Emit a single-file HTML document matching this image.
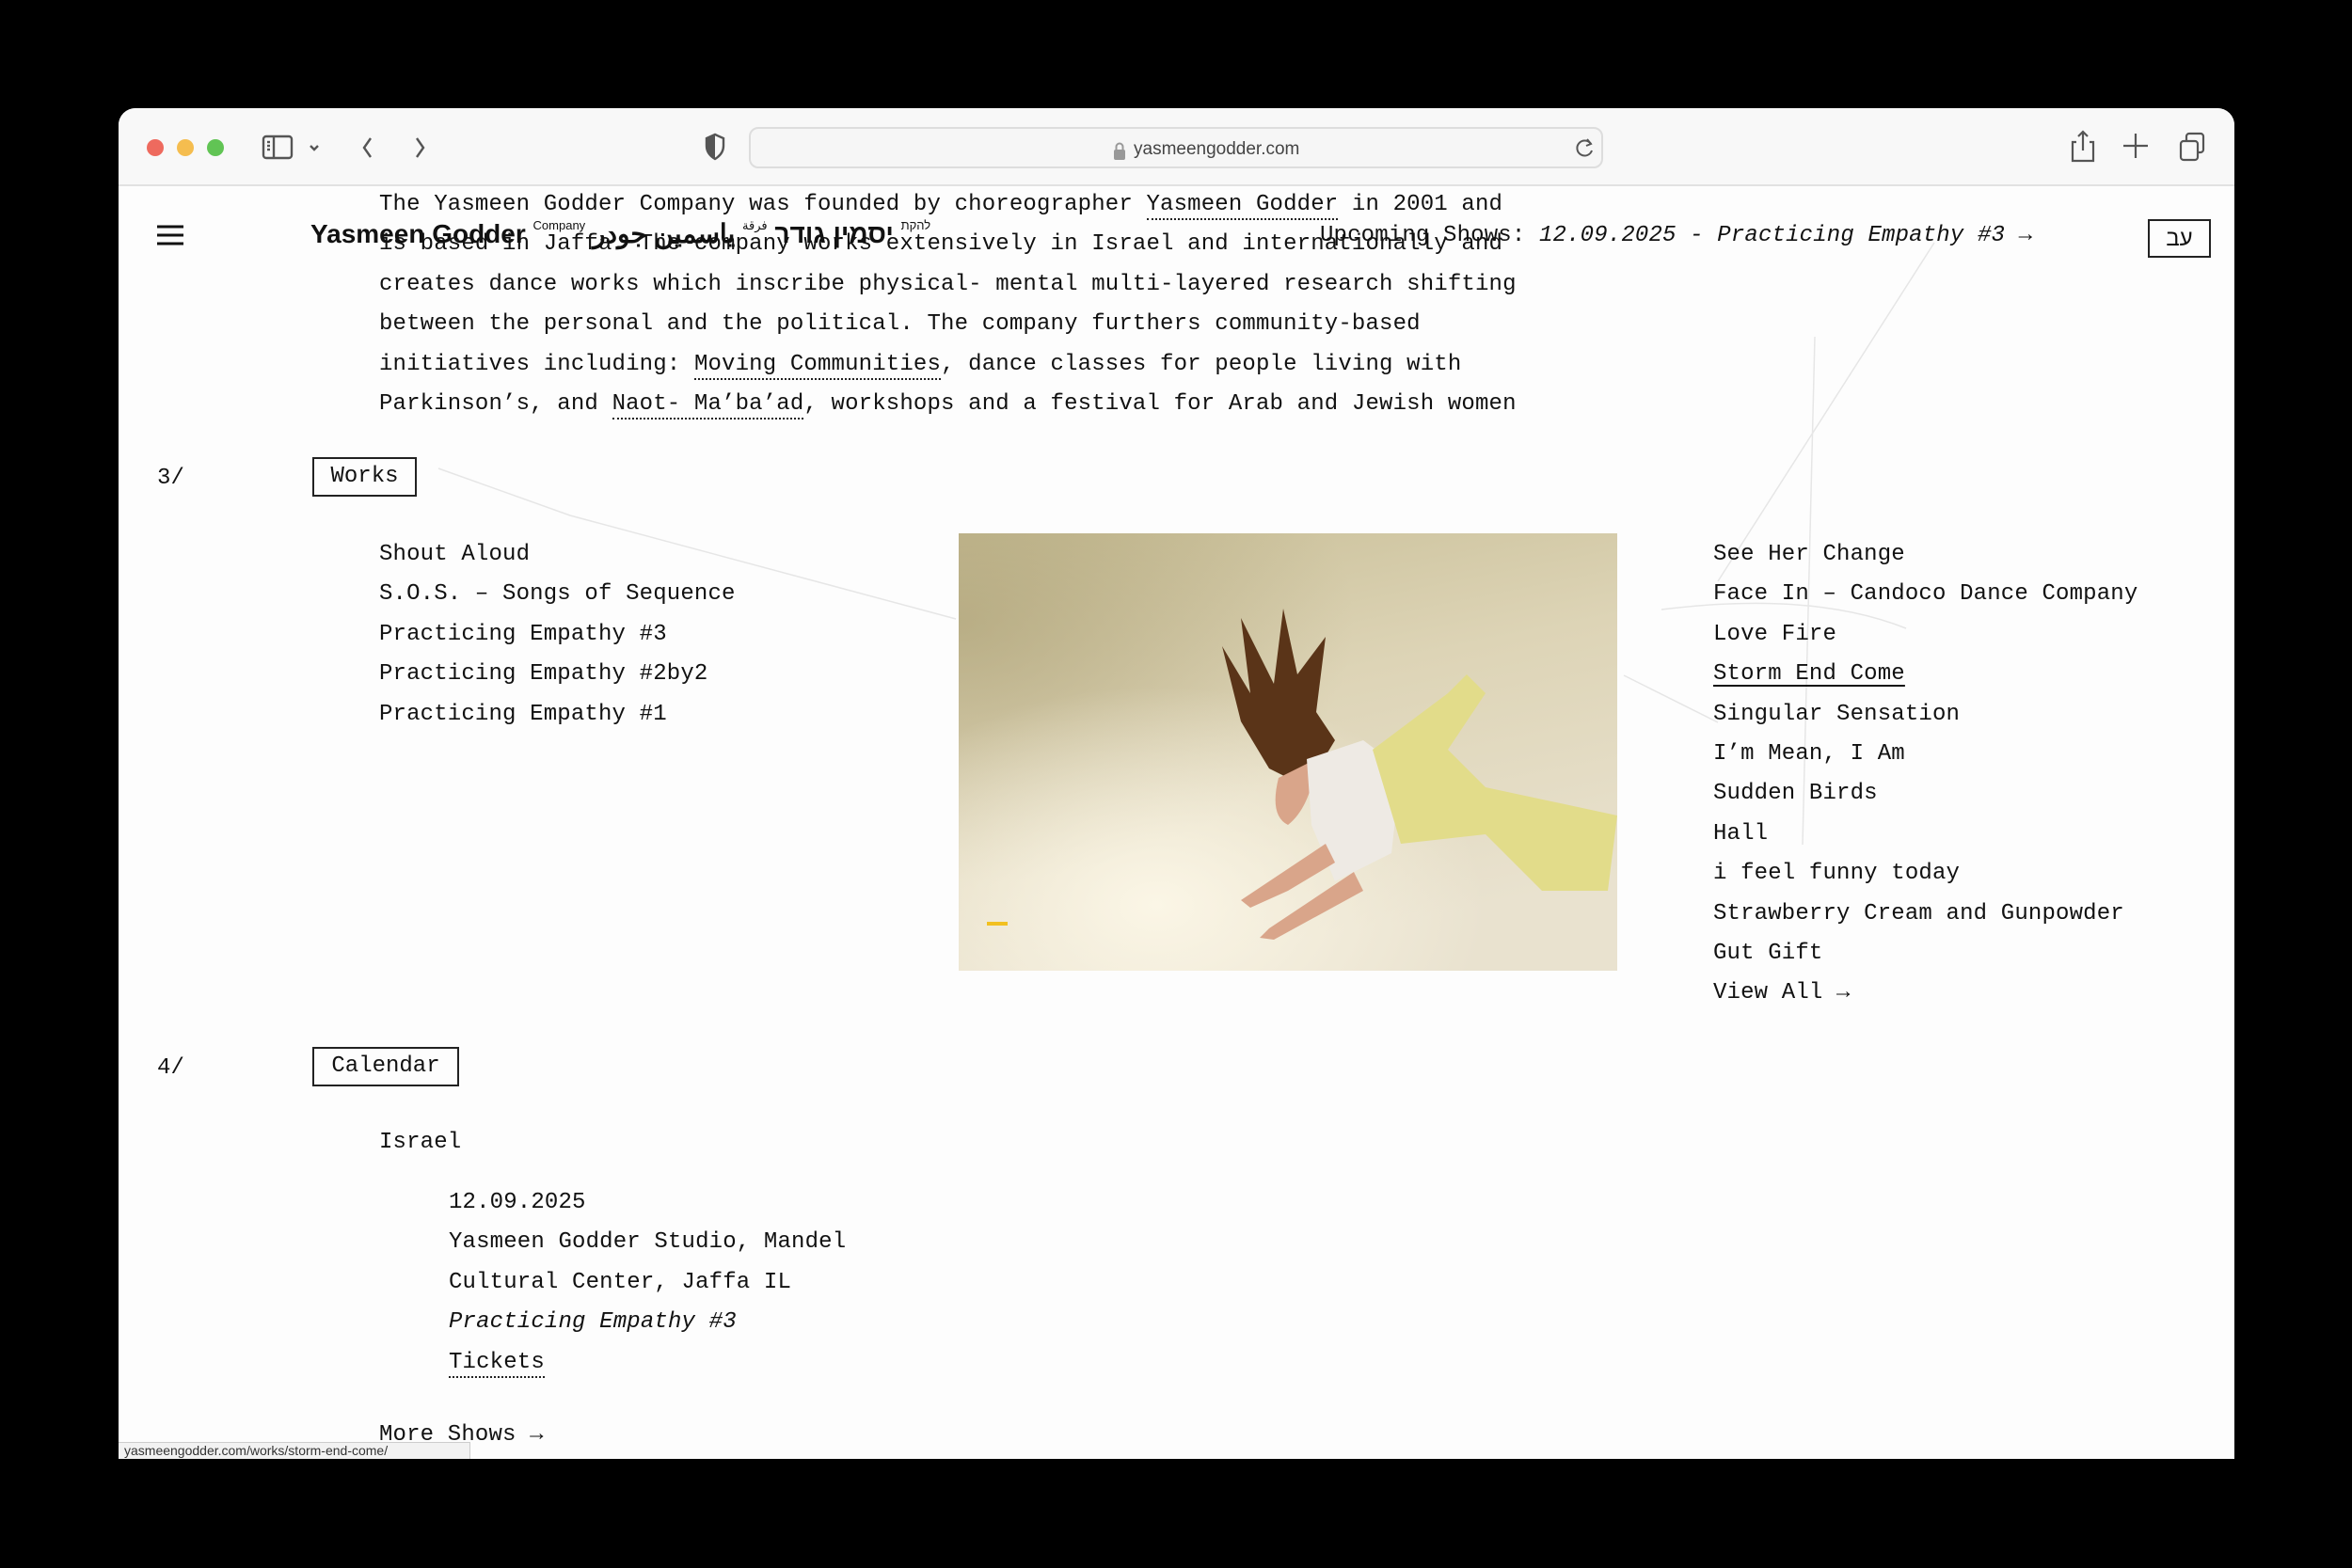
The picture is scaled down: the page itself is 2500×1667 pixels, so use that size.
<!DOCTYPE html>
<html><head><meta charset="utf-8">
<style>
*{margin:0;padding:0;box-sizing:border-box}
html,body{width:2500px;height:1667px;background:#000;overflow:hidden}
.win{position:absolute;left:126px;top:115px;width:2249px;height:1436px;background:#fdfdfd;border-radius:18px 18px 0 0;overflow:hidden}
.tb{position:absolute;left:0;top:0;width:100%;height:83px;background:#f8f8f8;border-bottom:2px solid #e2e2e2;z-index:5}
.m{font-family:"Liberation Mono",monospace;font-size:24px;letter-spacing:0.16px;color:#111;white-space:nowrap;position:absolute;line-height:42px}
.u{border-bottom:2px dotted #222;line-height:28px;display:inline-block}
.box{position:absolute;border:2px solid #222;font-family:"Liberation Mono",monospace;font-size:24px;text-align:center;color:#111}
.dot{position:absolute;width:18px;height:18px;border-radius:50%;top:33px}
</style></head><body>
<div class="win">
 <div class="tb">
  <div class="dot" style="left:30px;background:#ee6a5e"></div>
  <div class="dot" style="left:62px;background:#f5bd4f"></div>
  <div class="dot" style="left:94px;background:#61c454"></div>
  <svg style="position:absolute;left:150px;top:26px" width="200" height="34" viewBox="0 0 200 34" fill="none" stroke="#555" stroke-width="2.4">
   <rect x="4" y="4" width="30" height="23" rx="3"/><line x1="15" y1="4" x2="15" y2="27"/>
   <line x1="8" y1="10" x2="11" y2="10"/><line x1="8" y1="14" x2="11" y2="14"/><line x1="8" y1="18" x2="11" y2="18"/>
   <path d="M54 14l4 4 4-4"/>
   <path d="M118 6l-7 10 7 10"/><path d="M167 6l7 10-7 10"/>
  </svg>
  <svg style="position:absolute;left:622px;top:26px" width="24" height="30" viewBox="0 0 24 30"><path d="M12 2L3 6v8c0 7 4 11 9 14 5-3 9-7 9-14V6z" fill="none" stroke="#555" stroke-width="2.4"/><path d="M12 2L3 6v8c0 7 4 11 9 14z" fill="#555"/></svg>
  <div style="position:absolute;left:670px;top:20px;width:908px;height:44px;border:2px solid #ddd;border-radius:10px;background:#f6f6f6"></div>
  <svg style="position:absolute;left:1056px;top:36px" width="16" height="20" viewBox="0 0 16 20"><rect x="2" y="8" width="12" height="11" rx="2" fill="#999"/><path d="M4.5 8V5a3.5 3.5 0 017 0v3" fill="none" stroke="#999" stroke-width="2"/></svg>
  <div style="position:absolute;left:1079px;top:33px;font-family:'Liberation Sans',sans-serif;font-size:19px;color:#444">yasmeengodder.com</div>
  <svg style="position:absolute;left:1548px;top:30px" width="22" height="24" viewBox="0 0 22 24" fill="none" stroke="#555" stroke-width="2"><path d="M17 8a8 8 0 10 1 7"/><path d="M13 3l4 5-5 2"/></svg>
  <svg style="position:absolute;left:2074px;top:22px" width="160" height="40" viewBox="0 0 160 40" fill="none" stroke="#555" stroke-width="2.2">
   <path d="M7 14H3v20h22V14h-4"/><path d="M14 3v20M9 8l5-5 5 5"/>
   <path d="M70 5v26M57 18h26"/>
   <rect x="118" y="13" width="18" height="20" rx="3"/><path d="M124 13V8a3 3 0 013-3h12a3 3 0 013 3v14a3 3 0 01-3 3h-3"/>
  </svg>
 </div>
 <svg style="position:absolute;left:0;top:83px" width="2249" height="1353" viewBox="0 0 2249 1353" fill="none" stroke="#e6e6e6" stroke-width="1.5">
  <path d="M1262 380L1240 480"/><path d="M1803 160L1790 700"/><path d="M1930 60L1700 420"/>
  <path d="M340 300L480 350L890 460"/><path d="M1600 520L1700 570"/>
  <path d="M1640 450Q1800 430 1900 470"/>
 </svg>
 <div class="m" style="left:277px;top:82px;line-height:42.4px">The Yasmeen Godder Company was founded by choreographer <span class="u">Yasmeen Godder</span> in 2001 and<br>is based in Jaffa. The company works extensively in Israel and internationally and<br>creates dance works which inscribe physical- mental multi-layered research shifting<br>between the personal and the political. The company furthers community-based<br>initiatives including: <span class="u">Moving Communities</span>, dance classes for people living with<br>Parkinson’s, and <span class="u">Naot- Ma’ba’ad</span>, workshops and a festival for Arab and Jewish women</div>
 <svg style="position:absolute;left:40px;top:124px" width="30" height="22" viewBox="0 0 30 22" stroke="#111" stroke-width="3"><path d="M1 2h28M1 11h28M1 20h28"/></svg>
 <div style="position:absolute;left:204px;top:117px;font-family:'Liberation Sans Narrow','Liberation Sans','Noto Sans CJK SC',sans-serif;font-size:28px;font-weight:bold;color:#111;white-space:nowrap;direction:ltr;unicode-bidi:isolate">Yasmeen Godder <span style="font-size:13px;font-weight:normal;vertical-align:top">Company</span> <bdi>ياسمين جودر</bdi> <span style="font-size:13px;font-weight:normal;vertical-align:top"><bdi>فرقة</bdi></span> <bdi>יסמין גודר</bdi> <span style="font-size:13px;font-weight:normal;vertical-align:top"><bdi>להקת</bdi></span></div>
 <div class="m" style="left:1277px;top:115px">Upcoming Shows: <i>12.09.2025 - Practicing Empathy #3</i> →</div>
 <div class="box" style="left:2157px;top:118px;width:67px;height:41px;line-height:37px;font-family:'Liberation Sans',sans-serif">עב</div>
 <div class="m" style="left:41px;top:373px">3/</div>
 <div class="box" style="left:206px;top:371px;width:111px;height:42px;line-height:38px">Works</div>
 <div class="m" style="left:277px;top:454px;line-height:42.4px">Shout Aloud<br>S.O.S. – Songs of Sequence<br>Practicing Empathy #3<br>Practicing Empathy #2by2<br>Practicing Empathy #1</div>
 <svg style="position:absolute;left:893px;top:452px" width="700" height="465" viewBox="0 0 700 465">
  <defs>
   <linearGradient id="bg" x1="0" y1="0" x2="0.3" y2="1"><stop offset="0" stop-color="#c9bf98"/><stop offset="0.45" stop-color="#ddd4b6"/><stop offset="1" stop-color="#e9e2cf"/></linearGradient>
   <radialGradient id="li" cx="0.3" cy="0.85" r="0.5"><stop offset="0" stop-color="#fbf6e6"/><stop offset="1" stop-color="#fbf6e6" stop-opacity="0"/></radialGradient>
   <radialGradient id="tl" cx="0" cy="0.2" r="0.6"><stop offset="0" stop-color="#a89c70" stop-opacity=".6"/><stop offset="1" stop-color="#a89c70" stop-opacity="0"/></radialGradient>
  </defs>
  <rect width="700" height="465" fill="url(#bg)"/><rect width="700" height="465" fill="url(#tl)"/><rect width="700" height="465" fill="url(#li)"/>
  <path d="M330 250L300 200 280 120 310 170 300 90 335 160 345 80 360 150 390 110 380 190 400 220 370 270z" fill="#5a3418"/>
  <path d="M340 260Q330 300 350 310 375 290 380 240z" fill="#d9a58a"/>
  <path d="M370 240L430 220 470 250 460 340 400 370 375 310z" fill="#eeeae4"/>
  <path d="M440 230L520 170 540 150 560 170 520 230 560 270 700 300 690 380 620 380 560 320 470 330z" fill="#e2dc8a"/>
  <path d="M390 330L330 370 300 390 310 398 350 380 400 350z" fill="#d9a58a"/>
  <path d="M420 360L330 420 320 430 335 432 430 380z" fill="#d9a58a"/>
  <rect x="30" y="413" width="22" height="4" fill="#f2c020"/>
 </svg>
 <div class="m" style="left:1695px;top:454px;line-height:42.4px">See Her Change<br>Face In – Candoco Dance Company<br>Love Fire<br><span style="text-decoration:underline;text-decoration-thickness:2px;text-underline-offset:6px">Storm End Come</span><br>Singular Sensation<br>I’m Mean, I Am<br>Sudden Birds<br>Hall<br>i feel funny today<br>Strawberry Cream and Gunpowder<br>Gut Gift<br>View All →</div>
 <div class="m" style="left:41px;top:1000px">4/</div>
 <div class="box" style="left:206px;top:998px;width:156px;height:42px;line-height:38px">Calendar</div>
 <div class="m" style="left:277px;top:1079px">Israel</div>
 <div class="m" style="left:351px;top:1143px;line-height:42.4px">12.09.2025<br>Yasmeen Godder Studio, Mandel<br>Cultural Center, Jaffa IL<br><i>Practicing Empathy #3</i><br><span class="u">Tickets</span></div>
 <div class="m" style="left:277px;top:1390px">More Shows →</div>
 <div style="position:absolute;left:0;top:1418px;width:374px;height:18px;background:#f2f2f2;border:1px solid #ccc;border-left:none;border-bottom:none;font-family:'Liberation Sans',sans-serif;font-size:14px;line-height:17px;color:#333;padding-left:6px;white-space:nowrap;overflow:hidden">yasmeengodder.com/works/storm-end-come/</div>
</div>
</body></html>
